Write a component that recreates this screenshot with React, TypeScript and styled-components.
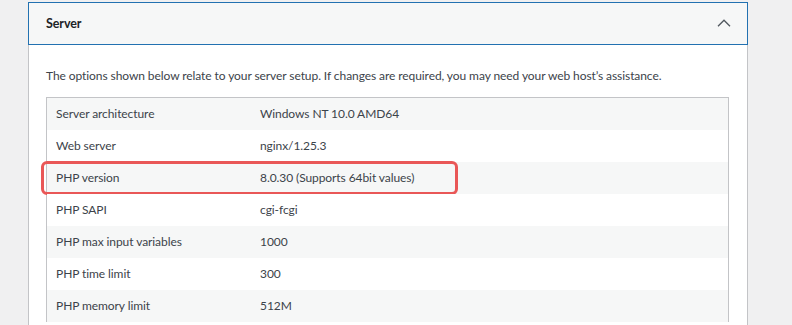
import React from "react";
import styled, { createGlobalStyle } from "styled-components";

interface InfoRow {
  label: string;
  value: string;
  marked?: boolean;
}

const rows: InfoRow[] = [
  { label: "Server architecture", value: "Windows NT 10.0 AMD64" },
  { label: "Web server", value: "nginx/1.25.3" },
  { label: "PHP version", value: "8.0.30 (Supports 64bit values)", marked: true },
  { label: "PHP SAPI", value: "cgi-fcgi" },
  { label: "PHP max input variables", value: "1000" },
  { label: "PHP time limit", value: "300" },
  { label: "PHP memory limit", value: "512M" },
];

export default function App() {
  return (
    <>
      <GlobalStyle />
      <Page>
        <Panel>
          <PanelHeader>
            <PanelTitle>Server</PanelTitle>
            <ChevronUp width="14" height="8" viewBox="0 0 14 8">
              <path d="M1 7.2 L7 1.2 L13 7.2" fill="none" stroke="#50575e" strokeWidth="1.3" />
            </ChevronUp>
          </PanelHeader>
          <PanelBody>
            <Description>
              The options shown below relate to your server setup. If changes are required, you may need your web host’s assistance.
            </Description>
            <InfoTable>
              {rows.map((row, idx) => (
                <Row key={row.label} $striped={idx % 2 === 0}>
                  <Cell>{row.label}</Cell>
                  <Cell>{row.value}</Cell>
                  {row.marked && <Highlight />}
                </Row>
              ))}
            </InfoTable>
          </PanelBody>
        </Panel>
      </Page>
    </>
  );
}

const GlobalStyle = createGlobalStyle`
  body {
    margin: 0;
    background: #f0f0f1;
    font-family: Lato, "Liberation Sans", Arial, sans-serif;
    font-size: 12px;
    letter-spacing: -0.08px;
    color: #3c434a;
  }
`;

const Page = styled.div`
  padding: 2px 0 0 28px;
  height: 323px;
  overflow: hidden;
`;

const Panel = styled.div`
  width: 718px;
  background: #fff;
  border: 1px solid #c3c4c7;
  border-top: none;
  min-height: 340px;
`;

const PanelHeader = styled.div`
  display: flex;
  align-items: center;
  justify-content: space-between;
  height: 41px;
  margin: 0 -1px;
  padding: 0 16px 0 17px;
  background: #f6f7f7;
  border: 1px solid #2271b1;
`;

const PanelTitle = styled.span`
  font-weight: 700;
  font-size: 12.5px;
  color: #1d2327;
`;

const ChevronUp = styled.svg`
  display: block;
  margin-top: -1px;
`;

const PanelBody = styled.div`
  padding: 21px 18px 0 17px;
`;

const Description = styled.p`
  margin: 0 0 11px;
  line-height: 20px;
  white-space: nowrap;
`;

const InfoTable = styled.div`
  border: 1px solid #c3c4c7;
  border-bottom: none;
`;

const Row = styled.div<{ $striped: boolean }>`
  position: relative;
  display: grid;
  grid-template-columns: 204px 1fr;
  height: 32px;
  align-items: center;
  background: ${(p) => (p.$striped ? "#f6f7f7" : "#fff")};
`;

const Cell = styled.div`
  padding: 0 9px;
  line-height: 20px;
`;

const Highlight = styled.div`
  position: absolute;
  left: -6px;
  top: -1px;
  width: 411px;
  height: 28px;
  border: 3px solid #e95757;
  border-radius: 6px;
`;
